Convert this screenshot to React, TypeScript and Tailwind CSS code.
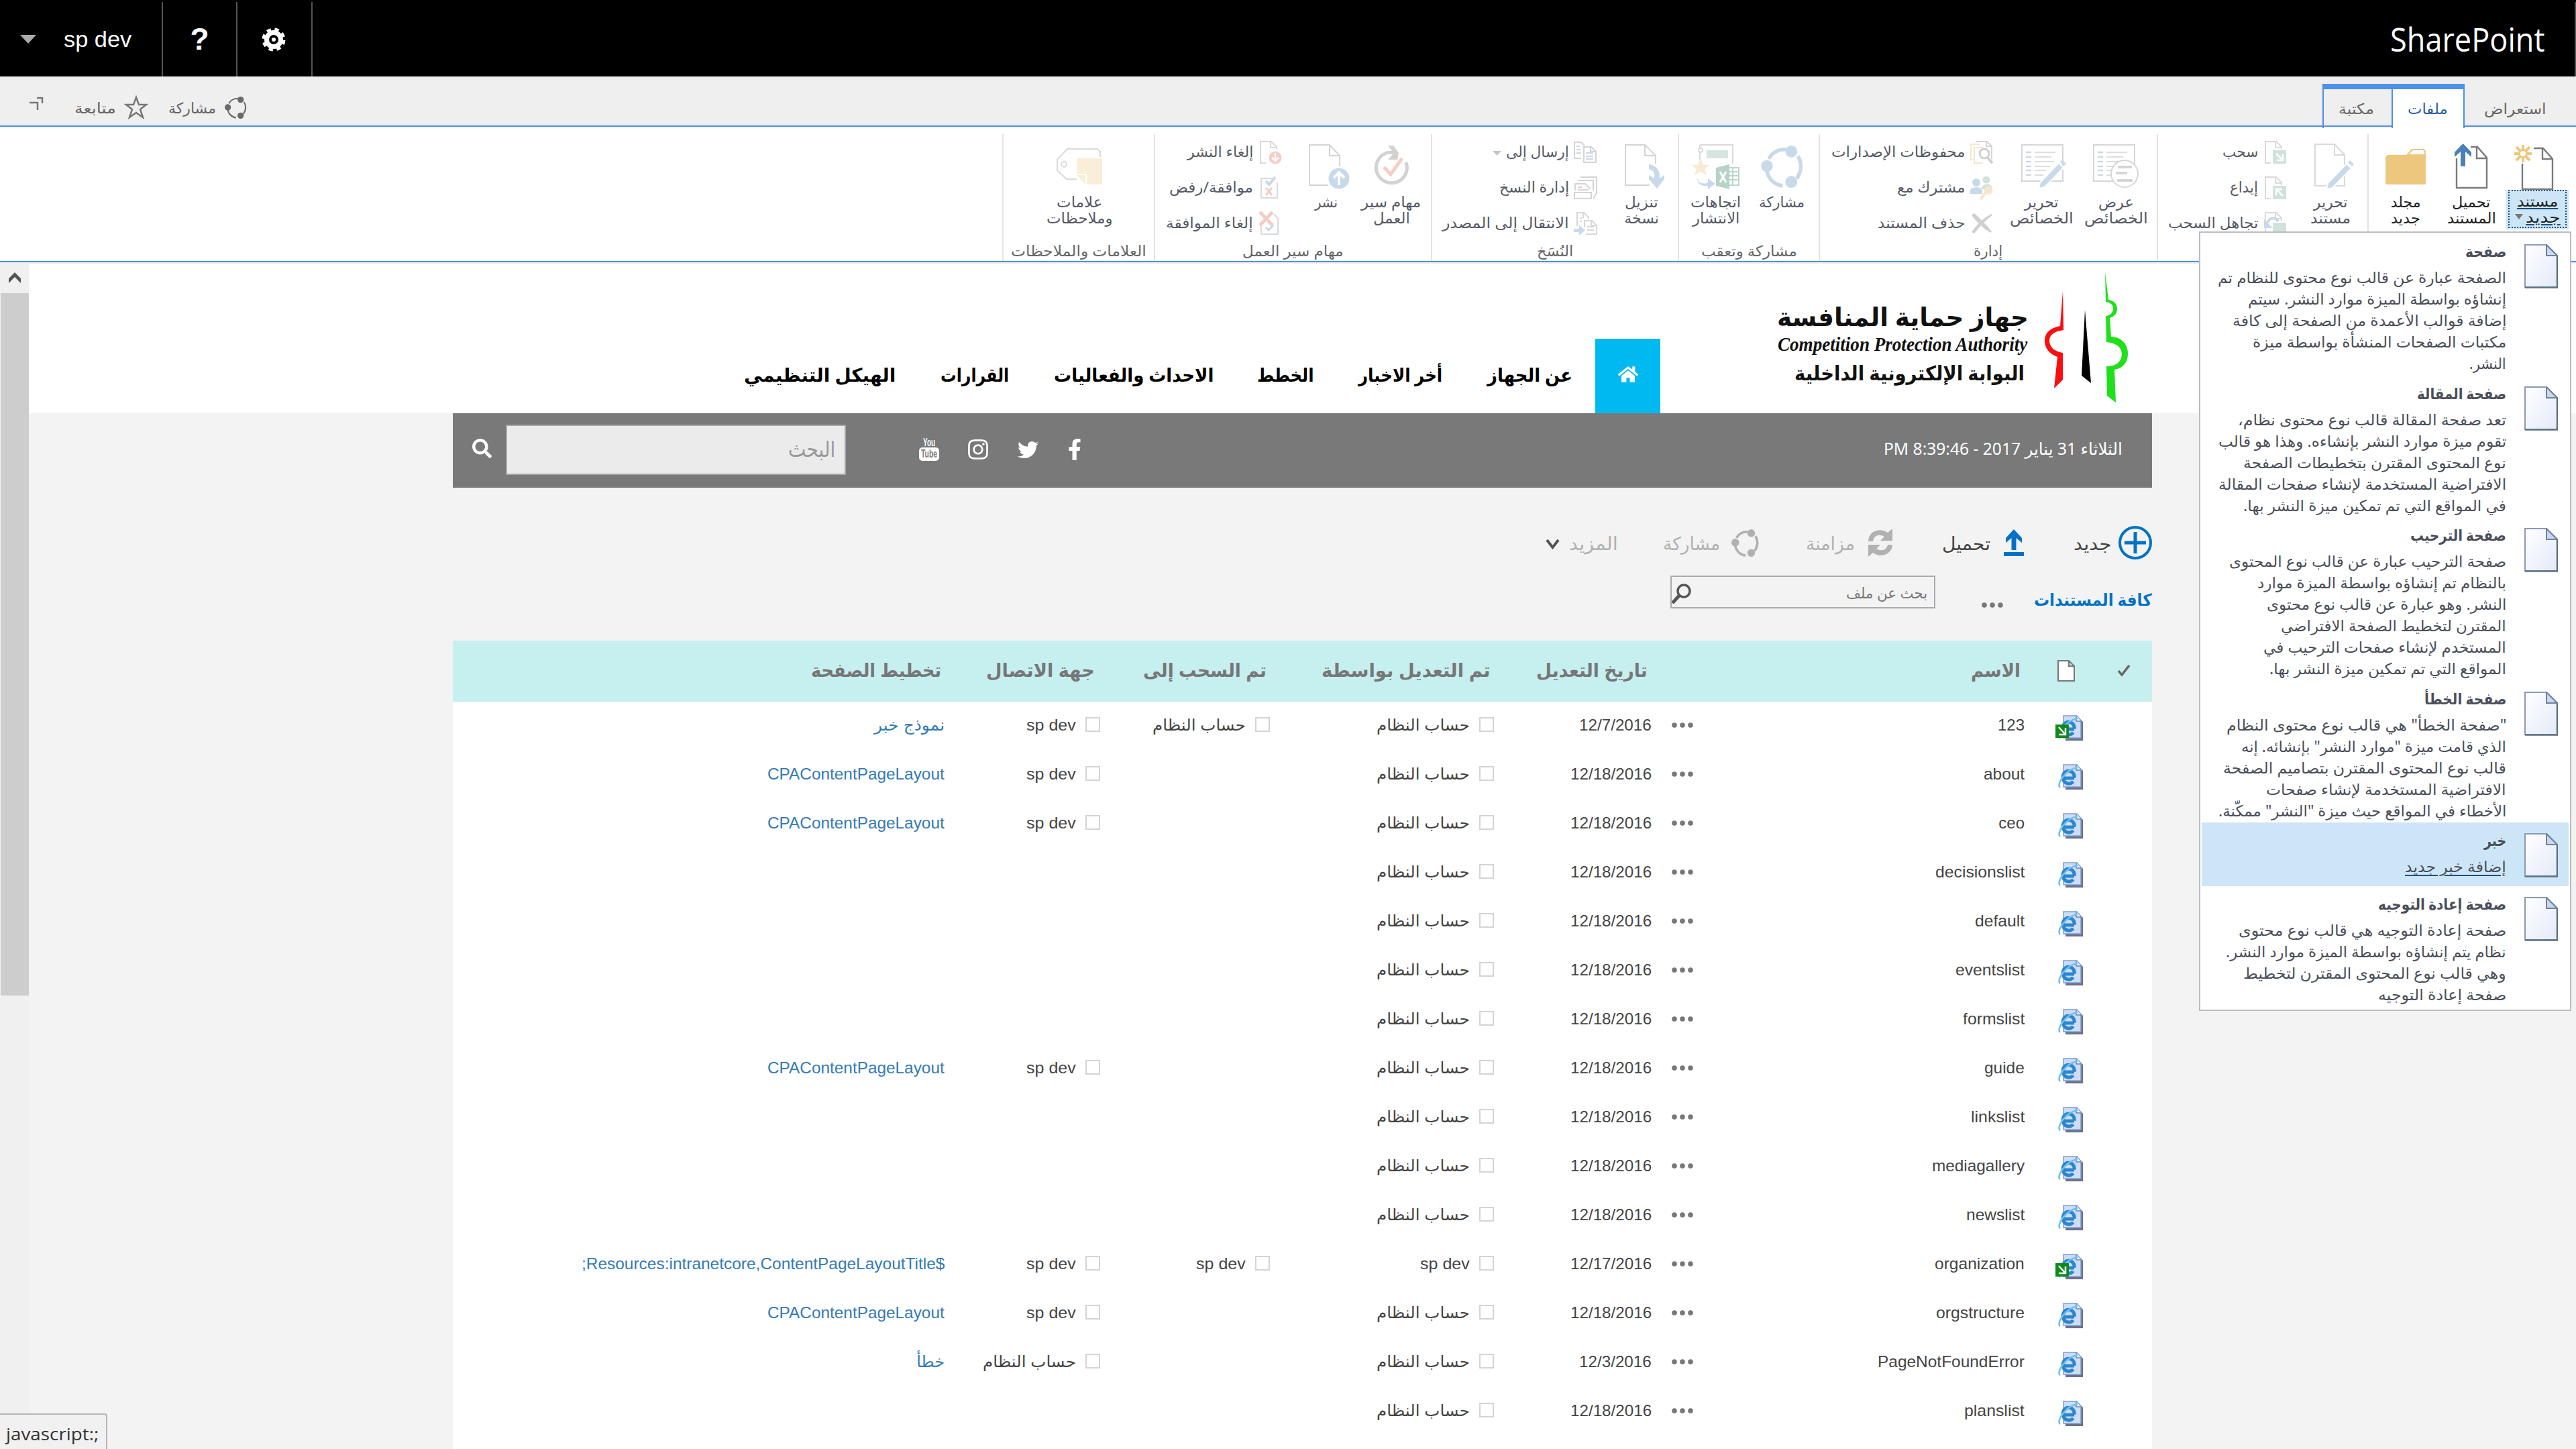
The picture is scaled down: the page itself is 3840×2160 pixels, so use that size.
import { ReactNode, useLayoutEffect, useRef, useState } from "react";
import { FaFacebookF, FaTwitter, FaInstagram, FaHome, FaSearch } from "react-icons/fa";

/* Single line of text condensed or widened to an exact width. */
function Fit({ w, children, className = "", ltr = false }: { w: number; children: ReactNode; className?: string; ltr?: boolean }) {
  const ref = useRef<HTMLSpanElement>(null);
  const [k, setK] = useState(1);
  useLayoutEffect(() => {
    if (ref.current) setK(w / ref.current.offsetWidth);
  }, [w, children]);
  return (
    <span dir={ltr ? "ltr" : undefined} className={`flex shrink-0 justify-start whitespace-nowrap ${className}`} style={{ width: w }}>
      <span ref={ref} className={`inline-block shrink-0 ${ltr ? "origin-left" : "origin-left rtl:origin-right"}`} style={{ transform: `scaleX(${k})` }}>
        {children}
      </span>
    </span>
  );
}

/* ---------- icons ---------- */
const ShareRing = ({ size, c, sw = 4 }: { size: number; c: string; sw?: number }) => (
  <svg width={size} height={size} viewBox="0 0 64 64" fill="none" stroke={c} strokeWidth={sw * 1.4}>
    <path d="M12 20A26 26 0 0 1 38 6M56 16A30 30 0 0 1 54 50M33 61A27 27 0 0 1 9 38" />
    <g fill={c} stroke="none">
      <circle cx="46" cy="9" r="9" />
      <circle cx="9" cy="31" r="9" />
      <circle cx="46" cy="55" r="9" />
    </g>
  </svg>
);

const GearIcon = () => (
  <svg width="36" height="36" viewBox="0 0 36 36" fill="none" stroke="#fff">
    <circle cx="18" cy="18" r="10.500" strokeWidth="7" />
    <circle cx="18" cy="18" r="15" strokeWidth="5" strokeDasharray="6.200 5.581" strokeDashoffset="-1" />
    <circle cx="18" cy="18" r="3" fill="#fff" stroke="none" />
  </svg>
);

const NewDocIcon = () => (
  <svg width="60" height="68" viewBox="0 0 60 68">
    <path d="M30 6H44L58 22V67H13V29M43 6V22H58" fill="none" stroke="#7a7a7a" strokeWidth="2.4" />
    <path d="M14 1V10M14 18V27M1 14H10M18 14H27M4 4L10 10M18 18L24 24M24 4L18 10M10 18L4 24" stroke="#ecc77e" strokeWidth="4" />
    <circle cx="14" cy="14" r="5.5" fill="#fff" stroke="#ecc77e" strokeWidth="3" />
  </svg>
);
const UploadDocIcon = () => (
  <svg width="52" height="68" viewBox="0 0 52 68">
    <path d="M25 5H35L49 21V66H4V22M34 5V22H49" fill="none" stroke="#7a7a7a" strokeWidth="2.4" />
    <path d="M13.500 0L26 13V20L17 12V34H10V12L1 20V13Z" fill="#4a80b9" />
  </svg>
);
const FolderIcon = () => (
  <svg width="62" height="56" viewBox="0 0 62 56">
    <path d="M1 14L4 11H32L40 2H58L61 5V55H1Z" fill="#edc77e" />
    <path d="M36 10L42 4H57L59 6V10Z" fill="#fff" />
  </svg>
);
const Pencil = ({ x, y }: { x: number; y: number }) => (
  <g transform={`translate(${x} ${y})`}>
    <path d="M29 5L36 12L8 41L-1 43L1 34Z" fill="#c8d9ea" stroke="#fff" strokeWidth="2" />
    <path d="M31 3L34 0L40 6L37 9Z" fill="#c8d9ea" />
  </g>
);
const EditDocIcon = () => (
  <svg width="60" height="70" viewBox="0 0 60 70">
    <path d="M2 2H31L46 18V64H2ZM31 2V18H46" fill="none" stroke="#d9d9d9" strokeWidth="2" />
    <Pencil x={20} y={26} />
  </svg>
);
const FormIcon = ({ kind }: { kind: "view" | "edit" }) => (
  <svg width="70" height="68" viewBox="0 0 70 68">
    <rect x="2" y="2" width="61" height="54" fill="#fff" stroke="#d6d6d6" strokeWidth="2" />
    <path d="M8 13H16M8 20H16M8 27H16M8 34H16M8 40H16M8 47H16" stroke="#c8d9ea" strokeWidth="2.5" />
    <path d="M21 13H52M21 20H46M21 27H50M21 34H44M21 40H38M21 47H34" stroke="#dedede" strokeWidth="2" />
    {kind === "edit" ? (
      <Pencil x={28} y={24} />
    ) : (
      <g>
        <circle cx="48" cy="45" r="20" fill="#fff" stroke="#d6d6d6" strokeWidth="2" />
        <path d="M38 35H59M35 44H52M37 55H60" stroke="#d6d6d6" strokeWidth="4" />
      </g>
    )}
  </svg>
);
const TrendsIcon = () => (
  <svg width="72" height="68" viewBox="0 0 72 68">
    <path d="M12 2H61V30M12 2V24" fill="none" stroke="#dadada" strokeWidth="2" />
    <circle cx="13" cy="10" r="3" fill="#fff" stroke="#dadada" strokeWidth="2" />
    <rect x="22" y="10" width="32" height="12" fill="#d5e5df" />
    <path d="M13 21L17 32H26L19 38L22 47L13 42L4 47L7 38L0 32H9Z" fill="#f9ead2" />
    <path d="M8 51C10 60 17 60 24 59V52L35 60L24 68V63C14 64 8 60 8 51Z" fill="#c8d9ea" />
    <rect x="50" y="36" width="20" height="26" fill="#fff" stroke="#bcd6ca" strokeWidth="2" />
    <path d="M52 42H69M52 48H69M52 54H69M61 36V62" stroke="#bcd6ca" strokeWidth="2" />
    <path d="M36 36L56 31V68L36 63Z" fill="#b6d3c5" />
    <path d="M42 42L51 58M51 42L42 58" stroke="#fff" strokeWidth="3" />
  </svg>
);
const DownloadDocIcon = () => (
  <svg width="62" height="68" viewBox="0 0 62 68">
    <path d="M38 62H2V2H31L47 18V30M31 2V18H47" fill="none" stroke="#d4d4d4" strokeWidth="2" />
    <path d="M37 31C50 33 54 42 53 52L60 47V53L49 67L37 53V47L45 52C46 44 44 40 37 38Z" fill="#c8d9ea" />
  </svg>
);
const PublishIcon = () => (
  <svg width="62" height="68" viewBox="0 0 62 68">
    <path d="M30 62H2V2H32L47 18V34M32 2V18H47" fill="none" stroke="#d4d4d4" strokeWidth="2" />
    <circle cx="46" cy="52" r="15.500" fill="#c8d9ea" />
    <path d="M46 62V44M38 51L46 43L54 51" fill="none" stroke="#fff" strokeWidth="4" />
  </svg>
);
const WorkflowIcon = () => (
  <svg width="54" height="62" viewBox="0 0 54 62">
    <path d="M20 11A23 23 0 1 0 49 25" fill="none" stroke="#d2d2d2" strokeWidth="5" />
    <path d="M22 0H30L38 11L36 21H22L29 13H18L20 8H28Z" fill="#d2d2d2" />
    <path d="M16 32L26 43L43 19" fill="none" stroke="#f3cec5" strokeWidth="5" />
  </svg>
);
const TagIcon = () => (
  <svg width="70" height="68" viewBox="0 0 70 68">
    <path d="M66 20V12L62 8H17L2 24V40L16 53H31" fill="none" stroke="#dadada" strokeWidth="2" />
    <circle cx="12" cy="31" r="4" fill="none" stroke="#dadada" strokeWidth="2" />
    <path d="M31 22H69V61H46V45H31Z" fill="#faeed9" />
    <path d="M31 47H44V61Z" fill="#faeed9" />
  </svg>
);

const SmallPage = ({ children }: { children?: ReactNode }) => (
  <svg width="34" height="36" viewBox="0 0 34 36">
    <path d="M10 34H2V2H18L26 10V14M17 2V11H26" fill="none" stroke="#dadada" strokeWidth="2" />
    {children}
  </svg>
);
const CheckOutSmall = () => (
  <SmallPage>
    <rect x="13" y="15" width="20" height="20" fill="#cfe3dc" />
    <path d="M18 20L27 29M28 21V30H19" fill="none" stroke="#fff" strokeWidth="2.500" />
  </SmallPage>
);
const CheckInSmall = () => (
  <SmallPage>
    <rect x="13" y="15" width="20" height="20" fill="#cfe3dc" />
    <path d="M28 30L19 21M18 29V20H27" fill="none" stroke="#fff" strokeWidth="2.500" />
  </SmallPage>
);
const DiscardSmall = () => (
  <SmallPage>
    <rect x="13" y="17" width="20" height="18" fill="#cfe3dc" />
    <path d="M21 15C16 8 8 9 5 17" fill="none" stroke="#c8d9ea" strokeWidth="4" />
    <path d="M0 12V25H13Z" fill="#c8d9ea" />
  </SmallPage>
);
const VersionsSmall = () => (
  <svg width="34" height="36" viewBox="0 0 34 36" fill="none" strokeWidth="2">
    <path d="M9 2H25L32 9V28M24 2V9H32" stroke="#d4d4d4" />
    <path d="M15 6H1V29H6M19 11H6V34H19" stroke="#f9e6cc" />
    <circle cx="21" cy="20" r="7" fill="#fff" stroke="#d0d0d0" strokeWidth="3" />
    <path d="M26 26L33 34" stroke="#d0d0d0" strokeWidth="4" />
  </svg>
);
const SharedSmall = () => (
  <svg width="34" height="36" viewBox="0 0 34 36">
    <circle cx="24" cy="6" r="5.500" fill="#cfe3dc" />
    <path d="M17 20C17 10 33 10 33 20Z" fill="#cfe3dc" />
    <circle cx="9" cy="10" r="6" fill="#c8d9ea" />
    <path d="M0 27V21C2 16 16 16 18 21V27Z" fill="#c8d9ea" />
    <path d="M27 16A6 6 0 1 1 24 27L18 36H15V32L21 24A6 6 0 0 1 27 16Z" fill="#f9e6cc" />
  </svg>
);
const DeleteSmall = () => (
  <svg width="34" height="34" viewBox="0 0 34 34">
    <path d="M2 5L6 2Q20 14 32 29L30 31Q14 21 2 5ZM31 3L33 5Q18 16 6 32L2 30Q14 12 31 3Z" fill="#d0d0d0" />
  </svg>
);
const SendSmall = () => (
  <svg width="36" height="34" viewBox="0 0 36 34" fill="none" stroke="#d4d4d4" strokeWidth="2">
    <path d="M11 26H1V2H11L16 7M15 9H26L33 16V32H15ZM25 9V16H33" />
    <path d="M4 8H9M4 13H11M4 18H11M18 18H29M18 23H29M18 27H29" stroke="#c8d9ea" />
  </svg>
);
const ManageCopiesSmall = () => (
  <svg width="36" height="36" viewBox="0 0 36 36" fill="none" stroke="#d4d4d4" strokeWidth="2">
    <path d="M10 2H34V26L29 34M6 7H29V22M2 22V12H17L25 20M6 17H13M6 21H22M1 25H26V34H1Z" />
  </svg>
);
const GoToSourceSmall = () => (
  <svg width="36" height="36" viewBox="0 0 36 36" fill="none" stroke="#d8d8d8" strokeWidth="2">
    <path d="M5 22V2H15L22 9V12M14 2V10M16 24V14H27L34 21V34H18M26 14V21H34M9 10H12M9 15H12M20 23H30M20 28H30" />
    <path d="M0 26H8V21L17 28L8 36V31H0Z" fill="#c8d9ea" stroke="none" />
  </svg>
);
const UnpublishSmall = () => (
  <SmallPage>
    <circle cx="24" cy="26" r="9.500" fill="#f3cec5" />
    <path d="M24 19V31M19 26L24 31L29 26" fill="none" stroke="#fff" strokeWidth="2.500" />
  </SmallPage>
);
const ApproveSmall = () => (
  <svg width="34" height="34" viewBox="0 0 34 34" fill="none">
    <path d="M20 3H3V32H27V9" stroke="#dadada" strokeWidth="2" />
    <path d="M10 7L15 12L24 1" stroke="#c8d9ea" strokeWidth="4" />
    <path d="M10 17L19 28M19 17L10 28" stroke="#f3cec5" strokeWidth="3" />
  </svg>
);
const CancelApproveSmall = () => (
  <svg width="34" height="36" viewBox="0 0 34 36" fill="none">
    <path d="M3 20V34H28V10L22 4" stroke="#dadada" strokeWidth="2" />
    <path d="M1 1L20 21M20 1L1 21" stroke="#f3cec5" strokeWidth="5" />
    <path d="M10 24L14 28L21 21" stroke="#c8d9ea" strokeWidth="3" />
  </svg>
);

const MenuPageIcon = () => (
  <svg width="50" height="66" viewBox="0 0 50 66" className="shrink-0">
    <defs>
      <linearGradient id="pg" x1="0" y1="0" x2="1" y2="1">
        <stop offset="0" stopColor="#ffffff" />
        <stop offset="1" stopColor="#e3eaf7" />
      </linearGradient>
    </defs>
    <path d="M1 1H33L49 17V64H1Z" fill="url(#pg)" stroke="#8a9bb5" strokeWidth="2" />
    <path d="M49 17V64.500H1" fill="none" stroke="#5d7186" strokeWidth="2.500" />
    <path d="M33 1V17H49Z" fill="#c9d8ef" stroke="#6f829b" strokeWidth="2" />
  </svg>
);

const FileIcon = ({ out }: { out?: boolean }) => (
  <svg width="42" height="38" viewBox="0 0 42 38">
    <path d="M15 3H34L41 10V38H15Z" fill="#6c6f86" />
    <path d="M12 1H32L38 8V34H12Z" fill="#cdddf7" stroke="#7f9fd2" strokeWidth="1.500" />
    <path d="M31 1V9H38" fill="#eef4ff" stroke="#5d86c6" strokeWidth="1.500" />
    <path d="M28 21H11.500A8.500 8.500 0 1 1 28 20.500M26.500 26A8.500 8.500 0 0 1 11.500 21" fill="none" stroke="#2b86cf" strokeWidth="5" />
    <path d="M7 35C1 30 15 8 33 5" fill="none" stroke="#6cc0ef" strokeWidth="2.500" />
    {out && (
      <g>
        <rect x="0" y="14" width="20" height="20" fill="#0f8a1b" />
        <path d="M5 18L14 28M15 19V29H5" fill="none" stroke="#fff" strokeWidth="2.500" />
      </g>
    )}
  </svg>
);

const Dots = () => (
  <svg width="32" height="8" viewBox="0 0 32 8" fill="#777">
    <circle cx="4" cy="4" r="3.800" />
    <circle cx="16" cy="4" r="3.800" />
    <circle cx="28" cy="4" r="3.800" />
  </svg>
);

/* ---------- ribbon parts ---------- */
type Line = [string, number];

function Big({ icon, lines, className, on = false }: { icon: ReactNode; lines: Line[]; className: string; on?: boolean }) {
  return (
    <div className={`flex shrink-0 flex-col items-center ${className}`}>
      <div className="mt-[14px] flex h-[70px] items-center justify-center pb-[2px]">{icon}</div>
      <div className={`mt-1 flex flex-col items-center ${on ? "text-[#222]" : "text-[#555a66]"}`}>
        {lines.map(([t, w]) => (
          <Fit key={t} w={w} className="h-6 leading-6">{t}</Fit>
        ))}
      </div>
    </div>
  );
}

function Small({ icon, text, w, gap, caret }: { icon: ReactNode; text: string; w: number; gap: string; caret?: boolean }) {
  return (
    <div className={`flex h-[53px] items-center ${gap}`}>
      <div className="flex h-9 items-center">{icon}</div>
      <Fit w={w} className="pb-[2px] text-[#555a66]">{text}</Fit>
      {caret && (
        <svg width="13" height="7" viewBox="0 0 13 7" className="mt-1"><path d="M0 0H13L6.500 7Z" fill="#c4c4c4" /></svg>
      )}
    </div>
  );
}

function Group({ className, label, labelW, children }: { className: string; label?: string; labelW?: number; children: ReactNode }) {
  return (
    <div className={`flex h-[189px] shrink-0 flex-col border-l-2 border-[#e3e3e3] ${className}`}>
      <div className="flex h-[159px] items-start">{children}</div>
      {label && <Fit w={labelW || 0} className="h-7 self-center text-[#666] leading-7">{label}</Fit>}
    </div>
  );
}

function Ribbon() {
  return (
    <div dir="rtl" className="flex h-[198px] overflow-hidden bg-white pt-[9px] text-[22px]">
      <Group className="w-[311px]">
        <div className="mr-[11px] flex w-[93px] shrink-0 flex-col items-center">
          <div className="mt-[15px] h-[68px] pr-[11px]"><NewDocIcon /></div>
          <div className="h-[59px] w-[93px] bg-[#cde6f7] px-[3px] pb-[2px] text-[#222]">
            <div className="flex h-[57px] flex-col items-center border-2 border-dotted border-[#1e4e79] pt-[2px]">
              <Fit w={61} className="h-6 leading-6 underline decoration-[#1e4e79] decoration-2 underline-offset-2">مستند</Fit>
              <div className="flex h-6 items-center gap-1">
                <Fit w={52} className="leading-6 underline decoration-[#1e4e79] decoration-2 underline-offset-2">جديد</Fit>
                <svg width="12" height="8" viewBox="0 0 12 8"><path d="M0 0H12L6 8Z" fill="#777" /></svg>
              </div>
            </div>
          </div>
        </div>
        <Big className="mr-[7px] w-[90px]" on icon={<UploadDocIcon />} lines={[["تحميل", 57], ["المستند", 73]]} />
        <Big className="mr-[8px] w-[90px]" on icon={<FolderIcon />} lines={[["مجلد", 45], ["جديد", 44]]} />
      </Group>
      <Group className="w-[314px]">
        <Big className="mr-[10px] w-[90px]" icon={<div className="pl-[10px]"><EditDocIcon /></div>} lines={[["تحرير", 51], ["مستند", 60]]} />
        <div className="mr-[20px] flex flex-col">
          <Small gap="gap-[9px]" icon={<CheckOutSmall />} text="سحب" w={53} />
          <Small gap="gap-[9px]" icon={<CheckInSmall />} text="إيداع" w={42} />
          <Small gap="gap-[9px]" icon={<DiscardSmall />} text="تجاهل السحب" w={134} />
        </div>
      </Group>
      <Group className="w-[504px]" label="إدارة" labelW={43}>
        <Big className="mr-[6px] w-[110px]" icon={<FormIcon kind="view" />} lines={[["عرض", 53], ["الخصائص", 95]]} />
        <Big className="mr-px w-[110px]" icon={<div className="pl-[8px]"><FormIcon kind="edit" /></div>} lines={[["تحرير", 51], ["الخصائص", 95]]} />
        <div className="mr-[17px] flex flex-col">
          <Small gap="gap-[7px]" icon={<VersionsSmall />} text="محفوظات الإصدارات" w={200} />
          <Small gap="gap-[7px]" icon={<SharedSmall />} text="مشترك مع" w={102} />
          <Small gap="gap-[7px]" icon={<DeleteSmall />} text="حذف المستند" w={131} />
        </div>
      </Group>
      <Group className="w-[210px]" label="مشاركة وتعقب" labelW={143}>
        <Big className="mr-[10px] w-[90px]" icon={<ShareRing size={63} c="#c8d9ea" />} lines={[["مشاركة", 68]]} />
        <Big className="mr-[8px] w-[90px]" icon={<TrendsIcon />} lines={[["اتجاهات", 75], ["الانتشار", 70]]} />
      </Group>
      <Group className="w-[368px]" label="النُسَخ" labelW={54}>
        <Big className="mr-[9px] w-[90px]" icon={<div className="pl-[9px]"><DownloadDocIcon /></div>} lines={[["تنزيل", 50], ["نسخة", 52]]} />
        <div className="mr-[20px] flex flex-col">
          <Small gap="gap-[7px]" icon={<SendSmall />} text="إرسال إلى" w={94} caret />
          <Small gap="gap-[7px]" icon={<ManageCopiesSmall />} text="إدارة النسخ" w={104} />
          <Small gap="gap-[7px]" icon={<GoToSourceSmall />} text="الانتقال إلى المصدر" w={189} />
        </div>
      </Group>
      <Group className="w-[413px]" label="مهام سير العمل" labelW={151}>
        <Big className="mr-[4px] w-[110px]" icon={<WorkflowIcon />} lines={[["مهام سير", 89], ["العمل", 55]]} />
        <Big className="mr-[2px] w-[80px]" icon={<div className="pl-[8px]"><PublishIcon /></div>} lines={[["نشر", 34]]} />
        <div className="mr-[26px] flex flex-col">
          <Small gap="gap-[9px]" icon={<UnpublishSmall />} text="إلغاء النشر" w={98} />
          <Small gap="gap-[9px]" icon={<ApproveSmall />} text="موافقة/رفض" w={125} />
          <Small gap="gap-[9px]" icon={<CancelApproveSmall />} text="إلغاء الموافقة" w={130} />
        </div>
      </Group>
      <Group className="w-[226px]" label="العلامات والملاحظات" labelW={202}>
        <Big className="mr-[51px] w-[120px]" icon={<TagIcon />} lines={[["علامات", 68], ["وملاحظات", 99]]} />
      </Group>
    </div>
  );
}

/* ---------- new-document menu ---------- */
const MENU: { title: Line; lines: Line[]; hot?: boolean }[] = [
  { title: ["صفحة", 59], lines: [["الصفحة عبارة عن قالب نوع محتوى للنظام تم", 428], ["إنشاؤه بواسطة الميزة موارد النشر. سيتم", 383], ["إضافة قوالب الأعمدة من الصفحة إلى كافة", 406], ["مكتبات الصفحات المنشأة بواسطة ميزة", 376], ["النشر.", 53]] },
  { title: ["صفحة المقالة", 131], lines: [["تعد صفحة المقالة قالب نوع محتوى نظام،", 398], ["تقوم ميزة موارد النشر بإنشاءه. وهذا هو قالب", 427], ["نوع المحتوى المقترن بتخطيطات الصفحة", 390], ["الافتراضية المستخدمة لإنشاء صفحات المقالة", 427], ["في المواقع التي تم تمكين ميزة النشر بها.", 390]] },
  { title: ["صفحة الترحيب", 141], lines: [["صفحة الترحيب عبارة عن قالب نوع المحتوى", 411], ["بالنظام تم إنشاؤه بواسطة الميزة موارد", 369], ["النشر. وهو عبارة عن قالب نوع محتوى", 355], ["المقترن لتخطيط الصفحة الافتراضي", 334], ["المستخدم لإنشاء صفحات الترحيب في", 360], ["المواقع التي تم تمكين ميزة النشر بها.", 351]] },
  { title: ["صفحة الخطأ", 120], lines: [["\"صفحة الخطأ\" هي قالب نوع محتوى النظام", 415], ["الذي قامت ميزة \"موارد النشر\" بإنشائه. إنه", 393], ["قالب نوع المحتوى المقترن بتصاميم الصفحة", 420], ["الافتراضية المستخدمة لإنشاء صفحات", 356], ["الأخطاء في المواقع حيث ميزة \"النشر\" ممكّنة.", 427]] },
  { title: ["خبر", 31], lines: [["إضافة خبر جديد", 149]], hot: true },
  { title: ["صفحة إعادة التوجيه", 189], lines: [["صفحة إعادة التوجيه هي قالب نوع محتوى", 397], ["نظام يتم إنشاؤه بواسطة الميزة موارد النشر.", 416], ["وهي قالب نوع المحتوى المقترن لتخطيط", 390], ["صفحة إعادة التوجيه", 189]] },
];

function Menu() {
  return (
    <div dir="rtl" className="absolute top-[345px] left-[3278px] flex h-[1162px] w-[555px] flex-col border-2 border-[#b9bdc1] bg-white px-[2px] pt-px text-[23px] text-[#4a4f5a]">
      {MENU.map((m) => (
        <div key={m.title[0]} className={`flex shrink-0 items-start pr-[16px] ${m.hot ? "h-[95px] bg-[#cde6f7]" : "pb-[1.500px]"}`}>
          <div className="mt-4 h-[66px]"><MenuPageIcon /></div>
          <div className="mr-[27px] flex flex-col pt-[8px]">
            <Fit w={m.title[1] + 2} className="h-[41px] font-bold leading-[36px]">{m.title[0]}</Fit>
            {m.lines.map(([t, w]) => (
              <Fit key={t} w={w + 2} className={`h-8 leading-8 last:mb-px ${m.hot ? "underline decoration-[#1e4e79] decoration-2 underline-offset-4" : ""}`}>{t}</Fit>
            ))}
          </div>
        </div>
      ))}
    </div>
  );
}

/* ---------- site header ---------- */
const NAV: [string, number, string][] = [
  ["عن الجهاز", 127, "mr-[34px]"],
  ["أخر الاخبار", 125, "mr-[67px]"],
  ["الخطط", 85, "mr-[66px]"],
  ["الاحداث والفعاليات", 238, "mr-[65px]"],
  ["القرارات", 102, "mr-[67px]"],
  ["الهيكل التنظيمي", 226, "mr-[67px]"],
];

function SiteHeader() {
  return (
    <div dir="rtl" className="flex h-[222px] bg-white pr-[632px]">
      <svg width="126" height="200" viewBox="0 0 126 200" className="mt-[10px] mr-[34px] shrink-0">
        <path d="M27 30L28 84V88C14 90 7 95 7 104S14 120 27 122V162L14 175L19 128C8 124 0 116 0 104S8 85 23 82Z" fill="#fb0d10" />
        <path d="M60 58L69 167L55 156Z" fill="#000" />
        <path d="M90 1L95 43C103 44 108 49 108 56S104 68 97 70L99 98C114 98 124 109 124 123S116 145 104 147L106 196L93 186L92 142H97C108 141 115 133 115 124S108 107 92 106L91 67C98 66 102 62 102 56S98 47 91 46Z" fill="#1fe01a" />
      </svg>
      <div className="mr-[24px] flex w-[374px] shrink-0 flex-col text-[#111]">
        <Fit w={375} className="mt-[52px] h-[50px] text-[38px] font-bold leading-[50px]">جهاز حماية المنافسة</Fit>
        <div className="flex h-[37px] justify-end">
          <Fit ltr w={372} className="font-['Liberation_Serif'] text-[30px] font-bold italic leading-[34px]">Competition Protection Authority</Fit>
        </div>
        <Fit w={343} className="mt-[3px] mr-[6px] h-10 text-[30px] font-bold leading-10">البوابة الإلكترونية الداخلية</Fit>
      </div>
      <div className="mt-[111px] mr-[175px] flex h-[111px] items-center text-[28px] font-bold text-black">
        <div className="flex h-[111px] w-[97px] items-center justify-center bg-[#00b9f1] pb-[6px] pl-px text-white"><FaHome size={30} /></div>
        {NAV.map(([t, w, m]) => (
          <div key={t} className={`${m} flex h-[111px] items-center pb-[5px]`}><Fit w={w}>{t}</Fit></div>
        ))}
      </div>
    </div>
  );
}

function GrayBar() {
  return (
    <div dir="rtl" className="flex h-[111px] items-center bg-[#797979] pr-[44px] text-white">
      <Fit w={356} className="pb-[5px] text-[25px]">الثلاثاء 31 يناير 2017 - 8:39:46 PM</Fit>
      <div className="mr-[1196px] flex items-center pb-[3px]">
        <FaFacebookF size={32} className="w-5" />
        <FaTwitter size={31} className="mr-[44px]" />
        <FaInstagram size={34} className="mr-[42px]" />
        <div className="mr-[41px] flex w-[30px] flex-col items-center">
          <Fit ltr w={18} className="h-[14px] font-['Liberation_Sans'] text-[16px] font-bold leading-[14px]">You</Fit>
          <div className="flex h-5 w-[30px] items-center justify-center rounded-[5px] bg-white text-[#797979]">
            <Fit ltr w={24} className="font-['Liberation_Sans'] text-[16px] font-bold leading-5">Tube</Fit>
          </div>
        </div>
      </div>
      <div className="mr-[109px] mb-[2px] flex h-[75px] w-[507px] items-center border-2 border-[#a6a6a6] bg-[#ebebeb] pr-[14px] pb-[4px] text-[#999]">
        <Fit w={70} className="text-[32px]">البحث</Fit>
      </div>
      <FaSearch size={29} className="mr-[21px] mb-[6px]" />
    </div>
  );
}

function Toolbar() {
  return (
    <div dir="rtl" className="flex h-[228px] flex-col text-[27px]">
      <div className="mt-[57px] flex h-[50px] items-center text-[#444]">
        <svg width="50" height="50" viewBox="0 0 50 50" fill="none" stroke="#0072c6" strokeWidth="4">
          <circle cx="25" cy="25" r="23" />
          <path d="M25 9V41M9 25H41" strokeWidth="5" />
        </svg>
        <Fit w={57} className="mr-[10px] pt-[2px]">جديد</Fit>
        <svg width="30" height="40" viewBox="0 0 30 40" className="mr-[74px]">
          <path d="M0 34H30V40H0ZM11.500 31V13L3 20V13L15 0L27 13V20L18.500 13V31Z" fill="#0072c6" />
        </svg>
        <Fit w={72} className="mr-[20px] pt-[2px]">تحميل</Fit>
        <svg width="36" height="42" viewBox="0 0 36 42" className="mr-[74px]" fill="#b1b1b1">
          <path d="M0 19C0 5 16 -3 29 6L36 0V18H18L24 12C15 7 8 11 7 19Z" />
          <path d="M36 24C36 37 20 45 7 36L0 42V24H18L12 30C21 35 28 31 29 24Z" />
        </svg>
        <Fit w={73} className="mr-[20px] pt-[2px] text-[#b1b1b1]">مزامنة</Fit>
        <div className="mr-[70px]"><ShareRing size={41} c="#b1b1b1" /></div>
        <Fit w={85} className="mr-[17px] pt-[2px] text-[#b1b1b1]">مشاركة</Fit>
        <Fit w={73} className="mr-[67px] pt-[2px] text-[#b1b1b1]">المزيد</Fit>
        <svg width="21" height="17" viewBox="0 0 21 17" className="mt-[5px] mr-[14px]"><path d="M2 2L10.500 13L19 2" fill="none" stroke="#555" strokeWidth="4" /></svg>
      </div>
      <div className="mt-[24px] flex h-[49px] items-start">
        <Fit w={176} className="mt-[10px] h-[50px] text-[25px] font-bold leading-[50px] text-[#0072c6]">كافة المستندات</Fit>
        <div className="mt-[40px] mr-[46px]"><Dots /></div>
        <div className="mr-[69px] flex h-[49px] w-[395px] items-center justify-between border-2 border-[#ababab] pr-[10px] text-[22px] text-[#777]">
          <Fit w={121} className="pt-px">بحث عن ملف</Fit>
          <svg width="30" height="30" viewBox="0 0 30 30" fill="none" stroke="#555" className="mt-1">
            <circle cx="18" cy="11" r="9" strokeWidth="3.500" />
            <path d="M11 18L1 29" strokeWidth="5" />
          </svg>
        </div>
      </div>
    </div>
  );
}

/* ---------- document table ---------- */
const SYS = "حساب النظام";
const CPA = "CPAContentPageLayout";
type Row = { name: string; date: string; by: string; out?: string; contact?: string; layout?: string; lw?: number; nw: number };
const ROWS: Row[] = [
  { name: "123", date: "12/7/2016", by: SYS, out: SYS, contact: "sp dev", layout: "نموذج خبر", lw: 105, nw: 40 },
  { name: "about", date: "12/18/2016", by: SYS, contact: "sp dev", layout: CPA, lw: 264, nw: 61 },
  { name: "ceo", date: "12/18/2016", by: SYS, contact: "sp dev", layout: CPA, lw: 264, nw: 39 },
  { name: "decisionslist", date: "12/18/2016", by: SYS, nw: 133 },
  { name: "default", date: "12/18/2016", by: SYS, nw: 74 },
  { name: "eventslist", date: "12/18/2016", by: SYS, nw: 103 },
  { name: "formslist", date: "12/18/2016", by: SYS, nw: 92 },
  { name: "guide", date: "12/18/2016", by: SYS, contact: "sp dev", layout: CPA, lw: 264, nw: 60 },
  { name: "linkslist", date: "12/18/2016", by: SYS, nw: 80 },
  { name: "mediagallery", date: "12/18/2016", by: SYS, nw: 138 },
  { name: "newslist", date: "12/18/2016", by: SYS, nw: 87 },
  { name: "organization", date: "12/17/2016", by: "sp dev", out: "sp dev", contact: "sp dev", layout: "$Resources:intranetcore,ContentPageLayoutTitle;", lw: 541, nw: 134 },
  { name: "orgstructure", date: "12/18/2016", by: SYS, contact: "sp dev", layout: CPA, lw: 264, nw: 132 },
  { name: "PageNotFoundError", date: "12/3/2016", by: SYS, contact: SYS, layout: "خطأ", lw: 42, nw: 219 },
  { name: "planslist", date: "12/18/2016", by: SYS, nw: 90 },
];

const COLS = "grid grid-cols-[88px_86px_494px_64px_236px_334px_253px_233px_745px] items-center";

const Person = ({ name }: { name?: string }) =>
  name ? (
    <div className="flex items-center gap-[14px] pr-[13px]">
      <div className="mb-[2px] h-[22px] w-[22px] border-2 border-[#d4d4d4]" />
      <Fit w={name === SYS ? 139 : 74}>{name}</Fit>
    </div>
  ) : (
    <div />
  );

function Table() {
  return (
    <div dir="rtl" className="font-['Liberation_Sans','DejaVu_Sans',sans-serif]">
      <div className={`${COLS} h-[91px] bg-[#c6efef] pb-[2px] text-[28px] font-bold text-[#777]`}>
        <svg width="20" height="18" viewBox="0 0 20 18" className="mr-[32px]"><path d="M2 9L7 15L18 1" fill="none" stroke="#666" strokeWidth="3.500" /></svg>
        <svg width="26" height="32" viewBox="0 0 26 32" className="mr-[27px]"><path d="M1 1H17L25 9V31H1ZM17 1V9H25" fill="#fff" stroke="#777" strokeWidth="2" /></svg>
        <Fit w={74} className="mr-[22px]">الاسم</Fit>
        <div />
        <Fit w={166} className="mr-[20px]">تاريخ التعديل</Fit>
        <Fit w={252} className="mr-[18px]">تم التعديل بواسطة</Fit>
        <Fit w={184} className="mr-[18px]">تم السحب إلى</Fit>
        <Fit w={162} className="mr-[21px]">جهة الاتصال</Fit>
        <Fit w={194} className="mr-[17px]">تخطيط الصفحة</Fit>
      </div>
      <div className="h-[1114px] overflow-hidden bg-white text-[24px] text-[#444]">
        {ROWS.map((r) => (
          <div key={r.name} className={`${COLS} h-[73px] pb-1`}>
            <div />
            <div className="mt-2 mr-[14px]"><FileIcon out={!!r.out} /></div>
            <Fit w={r.nw} className="mr-[16px]">{r.name}</Fit>
            <div className="mr-[16px]"><Dots /></div>
            <Fit w={r.date.length === 10 ? 121 : 108} className="mr-[14px]">{r.date}</Fit>
            <Person name={r.by} />
            <Person name={r.out} />
            <Person name={r.contact} />
            {r.layout ? <Fit w={r.lw || 0} className="mr-[12px] text-[#337ab7]">{r.layout}</Fit> : <div />}
          </div>
        ))}
      </div>
    </div>
  );
}

/* ---------- top bars ---------- */
function SuiteBar() {
  return (
    <div className="flex h-[114px] items-end justify-between bg-black font-['Liberation_Sans'] text-white">
      <div className="flex h-[111px]">
        <div className="flex w-[243px] items-center border-r-2 border-[#555] pl-[30px]">
          <svg width="24" height="13" viewBox="0 0 24 13"><path d="M0 0H24L12 13Z" fill="#aaa" /></svg>
          <Fit w={101} className="ml-[41px] text-[33px]">sp dev</Fit>
        </div>
        <div className="flex w-[111px] items-center justify-center border-r-2 border-[#555] text-[46px] font-bold">?</div>
        <div className="flex w-[112px] items-center justify-center border-r-2 border-[#555] pr-[2px]"><GearIcon /></div>
      </div>
      <div className="flex h-[111px] items-center border-r-2 border-[#555] pr-[44px]">
        <Fit w={231} className="font-['Open_Sans'] text-[49px]">SharePoint</Fit>
      </div>
    </div>
  );
}

function TabBar() {
  return (
    <div className="flex h-[77px] justify-between bg-[linear-gradient(to_bottom,#efefef_73px,#4f90e8_73px,#4f90e8_75px,#f3f3f3_75px)] text-[22px] text-[#666]">
      <div className="flex items-start pt-[28px] pl-[43px]">
        <svg width="22" height="22" viewBox="0 0 22 22" className="mt-[2px]" fill="none" stroke="#777" strokeWidth="2.500"><path d="M12 2H20V10M1 9H13V20" /></svg>
        <div dir="rtl" className="ml-[46px] flex h-[36px] items-center">
          <ShareRing size={33} c="#6a6a6a" sw={3} />
          <Fit w={71} className="mr-[13px]">مشاركة</Fit>
          <svg width="36" height="36" viewBox="0 0 36 36" className="mr-[30px]"><path d="M18 3L22 14H33L24 21L28 33L18 26L8 33L12 21L3 14H14Z" fill="none" stroke="#777" strokeWidth="2.500" /></svg>
          <Fit w={62} className="mr-[12px]">متابعة</Fit>
        </div>
      </div>
      <div dir="rtl" className="flex pt-[11px]">
        <div className="flex h-[62px] w-[166px] items-center pt-[11px] pr-[44px]"><Fit w={93}>استعراض</Fit></div>
        <div className="flex h-[66px] w-[109px] items-center border-x-2 border-t-8 border-[#4f90e8] bg-white pr-[23px] pb-[2px] text-[#2b5ba8]"><Fit w={60}>ملفات</Fit></div>
        <div className="flex h-[66px] w-[103px] items-center border-t-8 border-l-2 border-[#4f90e8] pr-[26px] pb-[2px]"><Fit w={53}>مكتبة</Fit></div>
      </div>
    </div>
  );
}

export default function App() {
  return (
    <div className="relative h-[2160px] w-[3840px] overflow-hidden bg-[#f3f3f3] font-['Noto_Sans','DejaVu_Sans',sans-serif]">
      <SuiteBar />
      <TabBar />
      <Ribbon />
      <div className="h-[5px] border-t-2 border-[#4f90e8] bg-[#f3f3f3]" />
      <div className="flex h-[1766px]">
        <div className="flex w-[43px] shrink-0 flex-col items-center bg-[#f0f0f0] pl-px">
          <div className="flex h-[43px] items-center"><svg width="18" height="16" viewBox="0 0 18 16" className="mt-[-3px]"><path d="M0 9L9 0L18 9V16L9 7L0 16Z" fill="#555" /></svg></div>
          <div className="h-[1047px] w-[42px] bg-[#cdcdcd]" />
        </div>
        <div className="flex w-[3797px] flex-col">
          <SiteHeader />
          <div className="ml-[632px] w-[2533px]">
            <GrayBar />
            <Toolbar />
            <Table />
          </div>
        </div>
      </div>
      <Menu />
      <div className="absolute bottom-0 left-0 flex h-[53px] w-[160px] items-center rounded-tr-[4px] border-t-2 border-r-2 border-[#b5b5b5] bg-[#f1f1f1] pt-[5px] pl-[9px] text-[#333]">
        <Fit w={138} className="font-['Open_Sans'] text-[26px]">javascript:;</Fit>
      </div>
    </div>
  );
}
